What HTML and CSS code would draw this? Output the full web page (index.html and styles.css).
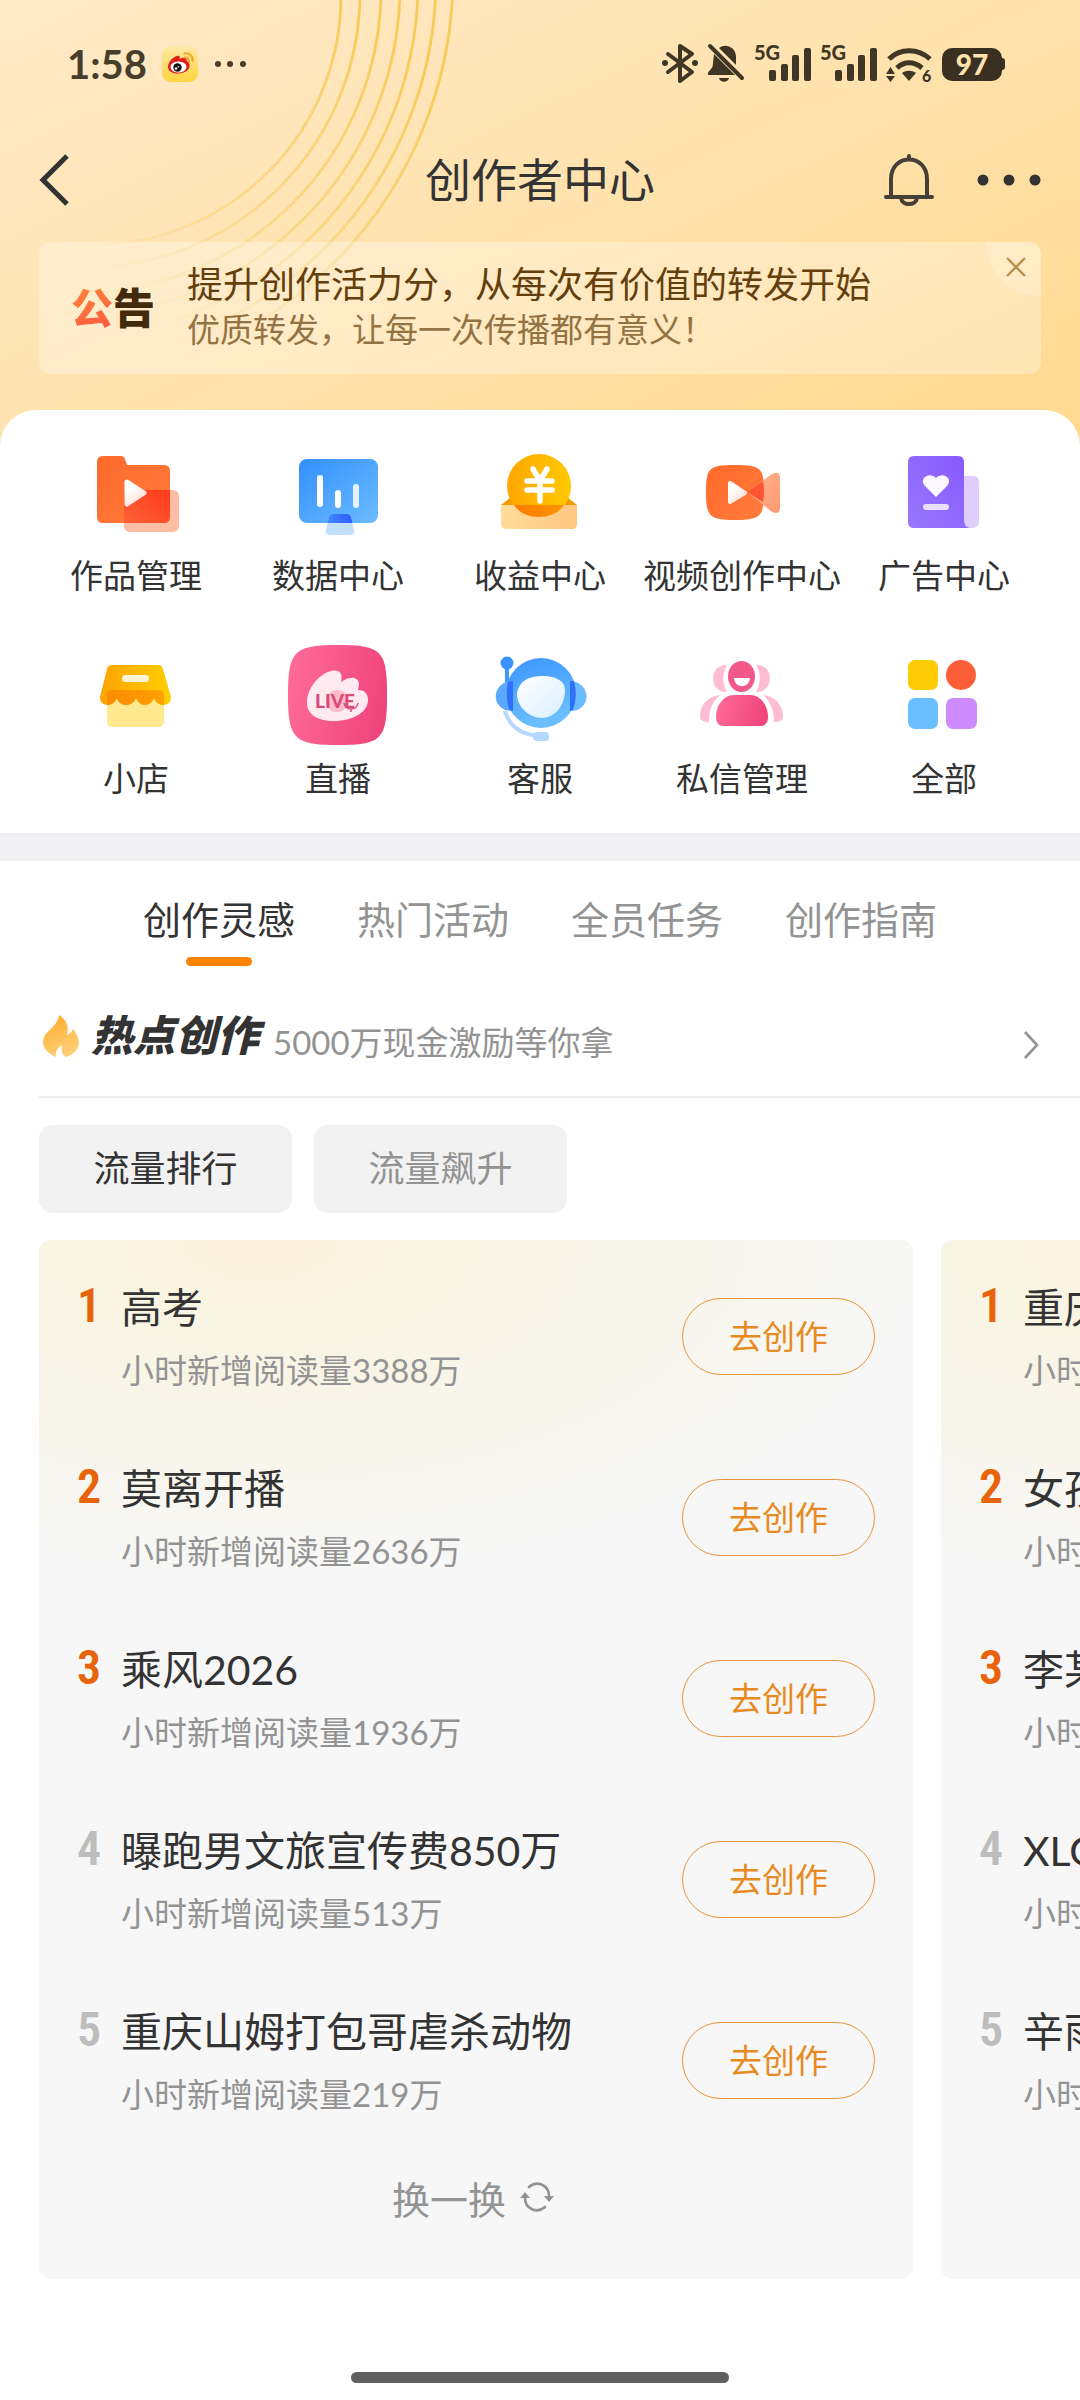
FILE: index.html
```html
<!DOCTYPE html>
<html lang="zh-CN">
<head>
    <meta charset="UTF-8">
    <meta name="viewport" content="width=device-width, initial-scale=1.0">
    <title>创作者中心</title>
    <link rel="stylesheet" href="styles.css">
</head>
<body>
    <header class="header">
        <!-- 背景弧线 -->
        <svg class="header-arcs" width="480" height="400" viewBox="0 0 480 400" aria-hidden="true">
            <defs>
                <linearGradient id="arcFade" gradientUnits="userSpaceOnUse" x1="400" y1="60" x2="130" y2="330">
                    <stop offset="0" stop-color="#f8cb58"/>
                    <stop offset="0.5" stop-color="#f9cf68" stop-opacity="0.6"/>
                    <stop offset="1" stop-color="#f9cf68" stop-opacity="0"/>
                </linearGradient>
            </defs>
            <g fill="none" stroke="url(#arcFade)" stroke-width="2.8">
                <circle cx="92" cy="-4" r="249"/>
                <circle cx="85" cy="-7" r="275"/>
                <circle cx="77" cy="-11" r="304"/>
                <circle cx="70" cy="-14" r="330"/>
                <circle cx="63" cy="-17" r="355"/>
                <circle cx="55" cy="-21" r="381"/>
                <circle cx="48" cy="-24" r="405"/>
            </g>
        </svg>

        <div class="status-bar">
            <div class="status-left">
                <span class="status-time">1:58</span>
                <svg width="36" height="36" viewBox="0 0 36 36" aria-hidden="true">
                    <defs>
                        <linearGradient id="wbBg" x1="0" y1="0" x2="0" y2="1">
                            <stop offset="0" stop-color="#ffe9a8"/>
                            <stop offset="1" stop-color="#ffd43c"/>
                        </linearGradient>
                    </defs>
                    <rect width="36" height="36" rx="9" fill="url(#wbBg)"/>
                    <path d="M6 21c0-5 5-10 9-11 3-.6 3 1 2.600 3 3-1.600 8-2 7 2 2 1 3.400 2.500 3 5.500-.8 4-5.600 7-11.600 7S6 25 6 21z" fill="#df1f1c"/>
                    <ellipse cx="16.500" cy="21" rx="8" ry="5.500" fill="#fff"/>
                    <circle cx="15.500" cy="21.500" r="4.200" fill="#111"/>
                    <circle cx="14" cy="22.500" r="1.300" fill="#fff"/>
                    <circle cx="16.500" cy="20.800" r=".8" fill="#fff"/>
                    <path d="M22.500 11.500c3-.5 5 1.500 4.500 4.500M22.500 7.500c5-1 9 3 8 8" fill="none" stroke="#f1a52c" stroke-width="2" stroke-linecap="round"/>
                </svg>
                <svg width="34" height="8" viewBox="0 0 34 8" fill="#463d2b" aria-hidden="true">
                    <circle cx="5" cy="4" r="3"/><circle cx="17" cy="4" r="3"/><circle cx="30" cy="4" r="3"/>
                </svg>
            </div>
            <div class="status-right">
                <svg width="38" height="42" viewBox="662 43 38 42" aria-hidden="true">
                    <path d="M669 54l24 18-12 9V46l12 8-24 18" fill="none" stroke="#403625" stroke-width="4" stroke-linejoin="round" stroke-linecap="round"/>
                    <circle cx="666" cy="63" r="3" fill="#403625"/><circle cx="696" cy="63" r="3" fill="#403625"/>
                </svg>
                <svg width="38" height="42" viewBox="709 42 38 42" fill="#403625" aria-hidden="true">
                    <path d="M721 47c3-2 5-2.500 8-2 6 1 9 6 9 11v8z"/>
                    <path d="M716 53l21 21h-26c-1.500 0-1.500-2-.5-3l4-5z"/>
                    <path d="M721 77h10c-1 5-9 5-10 0z"/>
                    <path d="M712 45l32 32" stroke="#403625" stroke-width="4" stroke-linecap="round"/>
                </svg>
                <svg class="signal" width="58" height="54" viewBox="750 36 58 54" fill="#403625" aria-hidden="true">
                    <text x="751" y="59" font-size="20">5G</text>
                    <rect x="766" y="69" width="7" height="11" rx="2"/><rect x="778" y="63" width="7" height="17" rx="2"/>
                    <rect x="789" y="54" width="7" height="26" rx="2"/><rect x="801" y="47" width="7" height="33" rx="2"/>
                </svg>
                <svg class="signal" width="58" height="54" viewBox="750 36 58 54" fill="#403625" aria-hidden="true">
                    <text x="751" y="59" font-size="20">5G</text>
                    <rect x="766" y="69" width="7" height="11" rx="2"/><rect x="778" y="63" width="7" height="17" rx="2"/>
                    <rect x="789" y="54" width="7" height="26" rx="2"/><rect x="801" y="47" width="7" height="33" rx="2"/>
                </svg>
                <svg class="signal" width="49" height="54" viewBox="883 36 49 54" fill="#403625" aria-hidden="true">
                    <path d="M887 58c11-11 29-11 41 0M895 67c7-7 17-7 25 0" fill="none" stroke="#403625" stroke-width="5"/>
                    <path d="M900 72c4-3 10-3 14 0l-7 8z"/>
                    <path d="M884 73l4.500-7 4.500 7zM884 75h9l-4.500 6z"/>
                    <text x="920" y="81" font-size="16">6</text>
                </svg>
                <svg class="signal" width="64" height="42" viewBox="942 42 64 42" aria-hidden="true">
                    <rect x="942" y="47" width="60" height="33" rx="10" fill="#3a3022"/>
                    <rect x="998" y="57" width="7" height="12" rx="3" fill="#3a3022"/>
                    <text x="972" y="74" font-size="28" text-anchor="middle" fill="#ffe3ae">97</text>
                </svg>
            </div>
        </div>

        <nav class="nav-bar">
            <a class="nav-back" href="#" aria-label="返回">
                <svg width="32" height="54" viewBox="0 0 32 54">
                    <path d="M28 3L4 27l24 24" fill="none" stroke="#333" stroke-width="5"/>
                </svg>
            </a>
            <h1 class="nav-title">创作者中心</h1>
            <div class="nav-actions">
                <button type="button" class="icon-btn" aria-label="通知">
                    <svg width="52" height="54" viewBox="0 0 52 54" fill="none" stroke="#444038" stroke-width="4" stroke-linecap="round">
                        <path d="M8 43V26C8 0 44 0 44 26v17M3 44h46M26 6V3M18 45c1 8 15 8 16 0"/>
                    </svg>
                </button>
                <button type="button" class="icon-btn" aria-label="更多">
                    <svg width="64" height="12" viewBox="0 0 64 12" fill="#333">
                        <circle cx="6" cy="6" r="5.500"/><circle cx="32" cy="6" r="5.500"/><circle cx="58" cy="6" r="5.500"/>
                    </svg>
                </button>
            </div>
        </nav>

        <section class="notice">
            <div class="notice-tag"><span class="notice-tag-hot">公</span>告</div>
            <div class="notice-text">
                <p class="notice-title">提升创作活力分，从每次有价值的转发开始</p>
                <p class="notice-desc">优质转发，让每一次传播都有意义！</p>
            </div>
            <button type="button" class="notice-close" aria-label="关闭">
                <svg width="20" height="20" viewBox="0 0 20 20">
                    <path d="M1 1l18 18M19 1L1 19" stroke="#b8914c" stroke-width="2.400"/>
                </svg>
            </button>
        </section>
    </header>

    <main class="sheet">
        <div class="menu-grid">
            <a class="menu-item" href="#">
                <svg class="menu-icon" viewBox="0 0 100 100">
                    <defs>
                        <linearGradient id="folderA" x1="0" y1="0" x2="1" y2="1"><stop offset="0" stop-color="#ff6a2a"/><stop offset="1" stop-color="#ff7b3d"/></linearGradient>
                        <linearGradient id="folderB" x1="1" y1="0" x2="0" y2="1"><stop offset="0" stop-color="#ff3a1c"/><stop offset="1" stop-color="#ff6138"/></linearGradient>
                        <linearGradient id="playW" x1="0" y1="0" x2="0.500" y2="1"><stop offset="0.300" stop-color="#fff"/><stop offset="1" stop-color="#ffe2da"/></linearGradient>
                    </defs>
                    <path d="M17 14h18q3 0 4 3l2 6h37q6 0 6 6v46q0 6-6 6H17q-6 0-6-6V20q0-6 6-6z" fill="url(#folderA)"/>
                    <rect x="38" y="48" width="55" height="42" rx="6" fill="#ffbea4"/>
                    <path d="M38 54q0-6 6-6h40v27q0 6-6 6H38z" fill="url(#folderB)"/>
                    <path d="M41 40l17 11-17 11z" fill="url(#playW)" stroke="url(#playW)" stroke-width="5" stroke-linejoin="round"/>
                </svg>
                <span class="menu-label">作品管理</span>
            </a>
            <a class="menu-item" href="#">
                <svg class="menu-icon" viewBox="0 0 100 100">
                    <defs>
                        <linearGradient id="screen" x1="0" y1="0" x2="1" y2="1"><stop offset="0" stop-color="#3390fd"/><stop offset="1" stop-color="#6bbcff"/></linearGradient>
                        <linearGradient id="stand" x1="0" y1="0" x2="1" y2="0"><stop offset="0" stop-color="#3f87ff"/><stop offset="1" stop-color="#2f5eff"/></linearGradient>
                    </defs>
                    <rect x="11" y="17" width="79" height="64" rx="8" fill="url(#screen)"/>
                    <path d="M45 72h14q3 0 4 3l3 13q1 5-4 5H42q-5 0-4-5l3-13q1-3 4-3z" fill="#c2dfff"/>
                    <path d="M45 72h14q3 0 4 3l1.500 6h-25l1.500-6q1-3 4-3z" fill="url(#stand)"/>
                    <path d="M32 36v26M50 51v12" stroke="#fff" stroke-width="6" stroke-linecap="round"/>
                    <path d="M68 45v18" stroke="#e3f2ff" stroke-width="6" stroke-linecap="round"/>
                </svg>
                <span class="menu-label">数据中心</span>
            </a>
            <a class="menu-item" href="#">
                <svg class="menu-icon" viewBox="0 0 100 100">
                    <defs>
                        <linearGradient id="coin" x1="0" y1="0" x2="1" y2="0"><stop offset="0" stop-color="#ffa700"/><stop offset="1" stop-color="#ffc900"/></linearGradient>
                        <linearGradient id="tray" x1="0" y1="0" x2="1" y2="0"><stop offset="0" stop-color="#ffdc9a"/><stop offset="1" stop-color="#ffc680"/></linearGradient>
                        <linearGradient id="coinLow" x1="0" y1="0" x2="1" y2="0"><stop offset="0" stop-color="#fd7a00"/><stop offset="1" stop-color="#fd9400"/></linearGradient>
                    </defs>
                    <path d="M11 63l9-7h58l9 7z" fill="#f59a00"/>
                    <circle cx="49" cy="44" r="32" fill="url(#coin)"/>
                    <path d="M11 63h76v19q0 5-5 5H16q-5 0-5-5z" fill="url(#tray)"/>
                    <path d="M24 63h50c-10 16-40 16-50 0z" fill="url(#coinLow)"/>
                    <path d="M43 27l7 12 7-12M37 39h25M37 48h25M50 39v20" fill="none" stroke="#fff" stroke-width="5.500" stroke-linecap="round" stroke-linejoin="round"/>
                </svg>
                <span class="menu-label">收益中心</span>
            </a>
            <a class="menu-item" href="#">
                <svg class="menu-icon" viewBox="0 0 100 100">
                    <defs>
                        <linearGradient id="lens" x1="0" y1="0" x2="1" y2="1"><stop offset="0" stop-color="#ffb48e"/><stop offset="1" stop-color="#ff9a72"/></linearGradient>
                    </defs>
                    <path d="M14 50C14 26 17 23 43 23s29 3 29 27-3 28-29 28-29-4-29-28z" fill="url(#folderA)"/>
                    <path d="M55 50l25-18q8-4 8 4v30q0 7-8 4z" fill="url(#lens)"/>
                    <path d="M55 50l16-11q2 11 0 21z" fill="#ff5433"/>
                    <path d="M38 41l15 10-15 9z" fill="url(#playW)" stroke="url(#playW)" stroke-width="4" stroke-linejoin="round"/>
                </svg>
                <span class="menu-label">视频创作中心</span>
            </a>
            <a class="menu-item" href="#">
                <svg class="menu-icon" viewBox="0 0 100 100">
                    <defs>
                        <linearGradient id="adDoc" x1="1" y1="0" x2="0" y2="1"><stop offset="0" stop-color="#8857ff"/><stop offset="1" stop-color="#9779fb"/></linearGradient>
                    </defs>
                    <path d="M66 34h13q6 0 6 6v39q0 7-7 7H66z" fill="#e0ceff"/>
                    <path d="M20 14h44q6 0 6 6v58q0 7 6 8H20q-6 0-6-6V20q0-6 6-6z" fill="url(#adDoc)"/>
                    <path d="M42 55L31 44c-7-8 5-15 11-8 6-7 18 0 11 8z" fill="#fbf7ff"/>
                    <rect x="29" y="62" width="26" height="6" rx="3" fill="#eadfff"/>
                </svg>
                <span class="menu-label">广告中心</span>
            </a>
            <a class="menu-item" href="#">
                <svg class="menu-icon" viewBox="0 0 100 100">
                    <defs>
                        <linearGradient id="roof" x1="0" y1="0" x2="1" y2="0"><stop offset="0" stop-color="#ffa300"/><stop offset="1" stop-color="#ffcf00"/></linearGradient>
                        <linearGradient id="awning" x1="0" y1="0" x2="1" y2="0"><stop offset="0" stop-color="#ff8a00"/><stop offset="1" stop-color="#ffa000"/></linearGradient>
                    </defs>
                    <path d="M21 50h57v26q0 6-6 6H27q-6 0-6-6z" fill="#ffe88d"/>
                    <path d="M26 20h46q4 0 5 4l8 28q0 8-8 8-7 0-9-7-3 7-9 7t-9-7q-3 7-10 7t-9-7q-3 7-9 7-8 0-8-8l7-28q1-4 5-4z" fill="url(#roof)"/>
                    <path d="M26 45h47q5 0 5 5v10q-7 0-10-7-3 7-9 7t-9-7q-3 7-10 7t-9-7q-3 7-10 7V50q0-5 5-5z" fill="url(#awning)"/>
                    <rect x="36" y="30" width="27" height="7" rx="3" fill="#fff3d6"/>
                </svg>
                <span class="menu-label">小店</span>
            </a>
            <a class="menu-item" href="#">
                <svg class="menu-icon" viewBox="0 0 100 100">
                    <defs>
                        <linearGradient id="live" x1="0" y1="0.400" x2="1" y2="0.600"><stop offset="0" stop-color="#fe6a97"/><stop offset="1" stop-color="#ef437c"/></linearGradient>
                    </defs>
                    <path d="M0 50C0 6 6 0 50 0s49 6 49 50-5 50-49 50S0 94 0 50z" fill="url(#live)"/>
                    <path d="M19 58c0-15 12-29 24-32 9-2 12 3 10 11 9-7 18-5 18 2 0 3-1 5-1 6 6 0 10 3 10 10 0 12-15 21-34 21-17 0-27-7-27-18z" fill="#ffeaf1"/>
                    <circle cx="49" cy="56" r="11" fill="#ffbdca"/>
                    <text class="live-text" x="47" y="63" text-anchor="middle">LIVE</text>
                    <path d="M56 58c1 8 13 8 14 0M63 64v3" fill="none" stroke="#d94a7b" stroke-width="1.500"/>
                </svg>
                <span class="menu-label">直播</span>
            </a>
            <a class="menu-item" href="#">
                <svg class="menu-icon" viewBox="0 0 100 100">
                    <defs>
                        <linearGradient id="helmet" x1="0" y1="0" x2="0.300" y2="1"><stop offset="0" stop-color="#3a94ff"/><stop offset="1" stop-color="#6cbfff"/></linearGradient>
                        <linearGradient id="face" x1="0" y1="0" x2="1" y2="1"><stop offset="0" stop-color="#fff"/><stop offset="1" stop-color="#d9efff"/></linearGradient>
                    </defs>
                    <path d="M15 66c4 15 16 23 32 25" fill="none" stroke="#b7d8fd" stroke-width="4"/>
                    <rect x="43" y="87" width="16" height="9" rx="4" fill="#b5d8ff"/>
                    <circle cx="51" cy="48" r="35" fill="url(#helmet)"/>
                    <path d="M17 20v22" stroke="#4097ff" stroke-width="4"/>
                    <circle cx="17" cy="18" r="6.500" fill="#3b91ff"/>
                    <path d="M23 36v30C0 66 0 37 23 36z" fill="#58a9ff"/>
                    <path d="M80 36v30c22 0 22-29 0-30z" fill="#69bcff"/>
                    <path d="M18 37q3-1 5-1v30q-2 0-4-2-4-14-1-27zM80 36h4q4 15-1 29l-3 1z" fill="#2f6ffa"/>
                    <path d="M27 48c2-12 12-17 25-17 14 0 23 5 23 14 0 14-9 28-23 28S26 60 27 48z" fill="url(#face)"/>
                </svg>
                <span class="menu-label">客服</span>
            </a>
            <a class="menu-item" href="#">
                <svg class="menu-icon" viewBox="0 0 100 100">
                    <g fill="#ffbdd5">
                        <path d="M35 20c-19-1-18 28 0 27-5-8-5-19 0-27zM64 20c19-1 18 28 0 27 5-8 5-19 0-27z"/>
                        <path d="M28 50C16 51 8 60 8 71c0 4 3 6 9 6 0-12 3-20 11-27zM71 50c12 1 20 10 20 21 0 4-3 6-9 6 0-12-3-20-11-27z"/>
                    </g>
                    <ellipse cx="49.500" cy="31.500" rx="13.500" ry="15.500" fill="#f2588a"/>
                    <path d="M42 33h16c-1 11-15 11-16 0z" fill="#fff"/>
                    <path d="M42 50h16c11 0 18 11 18 22 0 6-3 9-8 9H32c-5 0-8-3-8-9 0-11 7-22 18-22z" fill="url(#live)"/>
                </svg>
                <span class="menu-label">私信管理</span>
            </a>
            <a class="menu-item" href="#">
                <svg class="menu-icon" viewBox="0 0 100 100">
                    <rect x="14" y="15" width="30" height="30" rx="7" fill="#fdcc04"/>
                    <circle cx="67" cy="30" r="15" fill="#fe5e37"/>
                    <rect x="14" y="53" width="30" height="31" rx="7" fill="#6bbeff"/>
                    <rect x="52" y="53" width="31" height="31" rx="7" fill="#cd8bff"/>
                </svg>
                <span class="menu-label">全部</span>
            </a>
        </div>

        <div class="divider-band"></div>

        <nav class="tabs">
            <a class="tab active" href="#">创作灵感</a>
            <a class="tab" href="#">热门活动</a>
            <a class="tab" href="#">全员任务</a>
            <a class="tab" href="#">创作指南</a>
        </nav>

        <section class="hot">
            <a class="hot-head" href="#">
                <svg class="hot-flame" width="38" height="42" viewBox="0 0 38 42" aria-hidden="true">
                    <defs>
                        <linearGradient id="flame" x1="0" y1="0" x2="0.300" y2="1"><stop offset="0" stop-color="#fbab28"/><stop offset="1" stop-color="#ffcd72"/></linearGradient>
                    </defs>
                    <path d="M17 0c8 5 10 12 8 20 3-1 5-3 6-6 4 5 6 10 6 15-1 6-6 11-13 13-4-2-5-7-4-12-5 3-7 7-6 12C5 38 1 33 1 26 2 16 15 13 17 0z" fill="url(#flame)"/>
                </svg>
                <h2 class="hot-title">热点创作</h2>
                <span class="hot-desc">5000万现金激励等你拿</span>
                <svg class="hot-arrow" width="18" height="30" viewBox="0 0 18 30" aria-hidden="true">
                    <path d="M3 2l12 13L3 28" fill="none" stroke="#939393" stroke-width="2.600"/>
                </svg>
            </a>

            <div class="pills">
                <button type="button" class="pill active">流量排行</button>
                <button type="button" class="pill">流量飙升</button>
            </div>

            <div class="cards">
                <article class="card">
                    <ol class="rank-list">
                        <li class="rank-row">
                            <span class="rank-no top">1</span>
                            <div class="rank-info"><h3>高考</h3><p>小时新增阅读量3388万</p></div>
                            <button type="button" class="btn-create">去创作</button>
                        </li>
                        <li class="rank-row">
                            <span class="rank-no top">2</span>
                            <div class="rank-info"><h3>莫离开播</h3><p>小时新增阅读量2636万</p></div>
                            <button type="button" class="btn-create">去创作</button>
                        </li>
                        <li class="rank-row">
                            <span class="rank-no top">3</span>
                            <div class="rank-info"><h3>乘风2026</h3><p>小时新增阅读量1936万</p></div>
                            <button type="button" class="btn-create">去创作</button>
                        </li>
                        <li class="rank-row">
                            <span class="rank-no">4</span>
                            <div class="rank-info"><h3>曝跑男文旅宣传费850万</h3><p>小时新增阅读量513万</p></div>
                            <button type="button" class="btn-create">去创作</button>
                        </li>
                        <li class="rank-row">
                            <span class="rank-no">5</span>
                            <div class="rank-info"><h3>重庆山姆打包哥虐杀动物</h3><p>小时新增阅读量219万</p></div>
                            <button type="button" class="btn-create">去创作</button>
                        </li>
                    </ol>
                    <button type="button" class="btn-refresh">
                        换一换
                        <svg width="34" height="30" viewBox="0 0 34 30" aria-hidden="true">
                            <path d="M9 5c8-7 20-2 20 9M25 25C17 32 5 27 5 16" fill="none" stroke="#939393" stroke-width="2.600" stroke-linecap="round"/>
                            <path d="M24 14h10l-5 6zM0 16h10l-5-6z" fill="#939393"/>
                        </svg>
                    </button>
                </article>

                <article class="card">
                    <ol class="rank-list">
                        <li class="rank-row">
                            <span class="rank-no top">1</span>
                            <div class="rank-info"><h3>重庆</h3><p>小时新增阅读量</p></div>
                        </li>
                        <li class="rank-row">
                            <span class="rank-no top">2</span>
                            <div class="rank-info"><h3>女孩</h3><p>小时新增阅读量</p></div>
                        </li>
                        <li class="rank-row">
                            <span class="rank-no top">3</span>
                            <div class="rank-info"><h3>李某</h3><p>小时新增阅读量</p></div>
                        </li>
                        <li class="rank-row">
                            <span class="rank-no">4</span>
                            <div class="rank-info"><h3>XLG</h3><p>小时新增阅读量</p></div>
                        </li>
                        <li class="rank-row">
                            <span class="rank-no">5</span>
                            <div class="rank-info"><h3>辛雨</h3><p>小时新增阅读量</p></div>
                        </li>
                    </ol>
                </article>
            </div>
        </section>
    </main>

    <div class="home-bar"></div>
</body>
</html>
```
FILE: styles.css
```css
:root {
    --primary-color: #ff8200;
    --text-color: #333;
    --muted-color: #939393;
    --side: 39px;
}

* {
    box-sizing: border-box;
    margin: 0;
    padding: 0;
}

body {
    min-height: 100vh;
    background: #fff;
    color: var(--text-color);
    font-family: Lato, "Noto Sans CJK SC", sans-serif;
    font-size: 33px;
    overflow-x: hidden;
}

a {
    color: inherit;
    text-decoration: none;
}

button {
    border: none;
    background: none;
    color: inherit;
    font: inherit;
    cursor: pointer;
}

svg {
    display: block;
    flex-shrink: 0;
}

/* 顶部 */
.header {
    position: relative;
    padding: 0 var(--side) 72px;
    background: linear-gradient(155deg, #ffe9c8 0%, #ffe3b0 45%, #ffd98f 100%);
}

.header-arcs {
    position: absolute;
    top: 0;
    left: 0;
}

.status-bar {
    position: relative;
    display: flex;
    align-items: center;
    justify-content: space-between;
    height: 128px;
    padding: 0 35px 0 28px;
}

.status-left,
.status-right {
    display: flex;
    align-items: center;
    gap: 8px;
}

.status-left {
    gap: 15px;
}

.status-time {
    font-size: 40px;
    font-weight: 700;
    line-height: 48px;
    color: #463d2b;
}

.signal text {
    font-family: Lato, sans-serif;
    font-weight: 900;
}

.nav-bar {
    position: relative;
    display: grid;
    grid-template-columns: 1fr auto 1fr;
    align-items: center;
    height: 102px;
    padding-top: 2px;
}

.nav-title {
    font-size: 46px;
    font-weight: 400;
    line-height: 60px;
}

.nav-actions {
    display: flex;
    align-items: center;
    justify-content: flex-end;
    gap: 42px;
}

.notice {
    position: relative;
    display: flex;
    align-items: center;
    gap: 32px;
    height: 132px;
    margin-top: 12px;
    padding-left: 32px;
    border-radius: 12px;
    background: rgba(255, 255, 255, 0.3);
    overflow: hidden;
}

.notice-tag {
    font-size: 42px;
    font-weight: 900;
    line-height: 48px;
    color: #432a0c;
}

.notice-tag-hot {
    background: linear-gradient(160deg, #ff8a3a, #fb5540);
    -webkit-background-clip: text;
    background-clip: text;
    color: transparent;
}

.notice-text {
    padding-bottom: 4px;
}

.notice-title {
    font-size: 36px;
    line-height: 46px;
    color: #643f0e;
}

.notice-desc {
    line-height: 44px;
    color: #937343;
}

.notice-close {
    position: absolute;
    top: 0;
    right: 0;
    display: flex;
    align-items: center;
    justify-content: center;
    width: 55px;
    height: 54px;
    padding: 0 0 4px 4px;
    border-bottom-left-radius: 54px;
    background: rgba(255, 255, 255, 0.18);
}

/* 功能入口 */
.sheet {
    position: relative;
    margin-top: -36px;
    border-radius: 36px 36px 0 0;
    background: #fff;
}

.menu-grid {
    display: grid;
    grid-template-columns: repeat(5, 1fr);
    row-gap: 50px;
    padding: 32px 35px 35px;
}

.menu-item {
    display: flex;
    flex-direction: column;
    align-items: center;
    gap: 13px;
}

.menu-icon {
    width: 100px;
    height: 100px;
}

.live-text {
    font-size: 19px;
    font-weight: 900;
    fill: #d94a7b;
}

.menu-label {
    line-height: 40px;
    white-space: nowrap;
}

.divider-band {
    height: 28px;
    background: #f1f1f3;
}

/* 标签栏 */
.tabs {
    display: flex;
    justify-content: center;
    gap: 62px;
    padding-top: 38px;
}

.tab {
    display: flex;
    flex-direction: column;
    align-items: center;
    gap: 18px;
    font-size: 38px;
    line-height: 40px;
    color: var(--muted-color);
}

.tab.active {
    color: var(--text-color);
}

.tab::after {
    content: "";
    width: 66px;
    height: 9px;
    border-radius: 5px;
}

.tab.active::after {
    background: var(--primary-color);
}

/* 热点创作 */
.hot {
    padding: 20px 0 0 var(--side);
}

.hot-head {
    display: flex;
    align-items: flex-start;
    height: 112px;
    padding: 24px 40px 0 3px;
    border-bottom: 2px solid #ececec;
}

.hot-flame {
    margin: 5px 11px 0 0;
}

.hot-title {
    margin-right: 14px;
    font-size: 42px;
    font-weight: 900;
    font-style: italic;
    line-height: 50px;
}

.hot-desc {
    margin-top: 12px;
    color: var(--muted-color);
    line-height: 40px;
}

.hot-arrow {
    margin: 20px 0 0 auto;
}

.pills {
    display: flex;
    gap: 22px;
    padding: 27px 0;
}

.pill {
    width: 253px;
    height: 88px;
    padding-bottom: 3px;
    border-radius: 14px;
    background: #f2f2f2;
    font-size: 36px;
    line-height: 40px;
    color: var(--muted-color);
}

.pill.active {
    color: var(--text-color);
}

.cards {
    display: flex;
    gap: 28px;
    overflow: hidden;
}

.card {
    flex: 0 0 calc(100% - 167px);
    padding: 6px 38px 36px;
    border-radius: 12px;
    background: radial-gradient(ellipse 680px 340px at 220px 0, #fbf2de 0%, #f8f5e6 40%, rgba(247, 247, 247, 0) 100%) #f7f7f7;
}

.rank-list {
    list-style: none;
}

.rank-row {
    display: flex;
    align-items: center;
    height: 181px;
}

.rank-no {
    align-self: flex-start;
    width: 24px;
    margin: 33px 20px 0 0;
    font-family: "Roboto Condensed", Roboto, sans-serif;
    font-size: 48px;
    font-weight: 600;
    line-height: 54px;
    text-align: center;
    color: #bdbdbd;
}

.rank-no.top {
    color: #e8640c;
}

.rank-info {
    flex: 1;
    min-width: 0;
    padding-bottom: 2px;
    white-space: nowrap;
}

.rank-info h3 {
    font-size: 41px;
    font-weight: 400;
    line-height: 60px;
}

.rank-info p {
    margin-top: 8px;
    line-height: 48px;
    color: var(--muted-color);
}

.btn-create {
    width: 193px;
    height: 77px;
    padding-bottom: 2px;
    border: 1px solid #e8943a;
    border-radius: 39px;
    line-height: 40px;
    color: #e88a22;
}

.btn-refresh {
    display: flex;
    align-items: center;
    justify-content: center;
    gap: 14px;
    width: 100%;
    height: 92px;
    padding-right: 6px;
    font-size: 38px;
    color: var(--muted-color);
}

.home-bar {
    width: 35%;
    height: 11px;
    margin: 93px auto 17px;
    border-radius: 6px;
    background: #5f5f5f;
}
```
